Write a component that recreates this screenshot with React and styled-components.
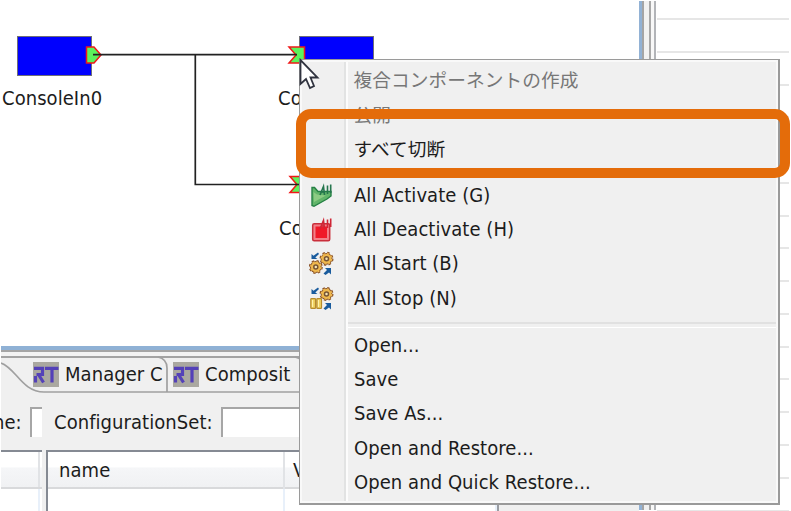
import React from "react";
import styled, { createGlobalStyle } from "styled-components";

const GlobalStyle = createGlobalStyle`
  * { box-sizing: border-box; }
  body { margin: 0; background: #fff; }
`;

const Window = styled.div`
  position: relative;
  width: 791px;
  height: 511px;
  padding: 1px 2px 1px 1px;
  overflow: hidden;
  display: grid;
  grid-template-columns: 638px 17px 1fr;
  background: #fff;
  color: #1c1c1c;
  font-family: "DejaVu Sans Condensed", "DejaVu Sans", "Noto Sans CJK JP", sans-serif;
  font-stretch: condensed;
  font-size: 20px;
  letter-spacing: 0.06px;
  white-space: nowrap;
`;

const Workbench = styled.div`
  display: grid;
  grid-template-rows: 345px 1fr;
  min-width: 0;
`;

const Canvas = styled.div`
  position: relative;
  overflow: hidden;
  background: #fff;
`;

const Wires = styled.svg`
  position: absolute;
  left: -1px;
  top: -1px;
`;

const NodeBox = styled.div`
  position: absolute;
  left: ${(p) => p.$x}px;
  top: 35px;
  width: 75px;
  height: 40px;
  border: 1px solid #6f6f78;
  background: #0000fe;
`;

const NodeLabel = styled.div`
  position: absolute;
  left: ${(p) => p.$x}px;
  top: ${(p) => p.$y}px;
  line-height: 24px;
`;

const VerticalSash = styled.div`
  display: grid;
  grid-template-columns: 3px 2px 5px 2px 3px 2px;
  height: 509px;
`;

const Strip = styled.div`
  background: ${(p) => p.$color};
`;

const PropertyTable = styled.div`
  margin-left: 1px;
  background: repeating-linear-gradient(
    to bottom,
    #fff 0 17px,
    #e6e6e6 17px 19px,
    #fff 19px 32.77px
  );
`;

const BottomView = styled.div`
  display: grid;
  grid-template-rows: 4px 2px 4px 2px 34px 58px 1fr;
  background: #f0f0f0;
  min-width: 0;
`;

const TabBar = styled.div`
  display: flex;
  position: relative;
  padding-left: 32px;
`;

const TabOutline = styled.svg`
  position: absolute;
  left: 0;
  top: -2px;
`;

const Tab = styled.div`
  position: relative;
  display: flex;
  align-items: center;
  width: ${(p) => p.$w}px;
  height: 32px;
  padding-top: 1px;
  gap: 6px;
  line-height: 22px;
`;

const TabTitle = styled.span`
  padding-bottom: 2px;
`;

const RtBadge = styled.div`
  display: flex;
  justify-content: center;
  width: 26px;
  height: 25px;
  background: #aaa8a0;
`;

const FormRow = styled.div`
  display: flex;
  align-items: flex-start;
  padding-top: 15px;
  line-height: 30px;
`;

const FieldLabel = styled.div`
  width: ${(p) => p.$w}px;
  margin-left: ${(p) => p.$ml || 0}px;
`;

const Field = styled.div`
  width: ${(p) => p.$w}px;
  height: 30px;
  border-top: 2px solid #a6a6a6;
  border-left: 2px solid #a6a6a6;
  background: #fff;
`;

const Tables = styled.div`
  display: grid;
  grid-template-columns: 41px 453px 1fr;
  column-gap: 4px;
`;

const Table = styled.div`
  border-top: 2px solid #858a93;
  border-left: ${(p) => (p.$framed ? "2px solid #858a93" : "0")};
  border-right: ${(p) => (p.$framed ? "2px solid #9a9da3" : "0")};
  background: #fff;
`;

const HeaderRow = styled.div`
  display: grid;
  grid-template-columns: ${(p) => p.$cols};
  height: 37px;
  border-bottom: 2px solid #d8d9db;
  background: linear-gradient(#fff 0 42%, #f5f6f8 46%, #f0f1f3 100%);
  line-height: 37px;
`;

const HeaderCell = styled.div`
  padding-left: ${(p) => p.$pad || 8}px;
  border-right: 2px solid #e1e3e6;
`;

const BodyRow = styled.div`
  display: grid;
  grid-template-columns: ${(p) => p.$cols};
  height: 22px;
`;

const BodyCell = styled.div`
  border-right: 2px solid #e8f0fa;
`;

const ContextMenu = styled.div`
  position: absolute;
  left: 299px;
  top: 59px;
  width: 481px;
  height: 446px;
  padding: 3px 2px;
  border: 2px solid #9a9a9a;
  border-top-width: 1px;
  border-left-width: 1px;
  box-shadow: inset 0 0 0 2px #f9f9f9;
  background: linear-gradient(to right, transparent 44px, #e2e3e3 44px 46px, #fcfcfc 46px 48px, transparent 48px),
    #f0f0f0;
`;

const MenuItem = styled.div`
  display: grid;
  grid-template-columns: ${(p) => (p.$jp ? 51.5 : 52)}px 1fr;
  height: 34.35px;
  align-items: center;
  color: ${(p) => (p.$disabled ? "#777" : "#1c1c1c")};
  font-size: ${(p) => (p.$jp ? 18.7 : 20)}px;
  line-height: 30px;
`;

const ItemText = styled.span`
  padding-top: ${(p) => (p.$jp ? 2 : 0)}px;
  padding-bottom: ${(p) => (p.$jp ? 0 : 2)}px;
`;

const IconSlot = styled.div`
  display: flex;
  width: 26px;
  height: 26px;
  margin-left: 7px;
`;

const MenuDivider = styled.div`
  height: 12.5px;
  padding-top: 6px;
  margin-left: 46px;

  &::before {
    content: "";
    display: block;
    height: 3px;
    border-top: 2px solid #e1e1e1;
    border-bottom: 1px solid #fff;
  }
`;

const Highlight = styled.div`
  position: absolute;
  left: 296px;
  top: 109px;
  width: 494px;
  height: 69px;
  border: 10px solid #e46c0a;
  border-radius: 15px;
`;

const Pointer = styled.svg`
  position: absolute;
  left: 298px;
  top: 58px;
`;

const AllMark = ({ color }) => (
  <path d="M11 12 L14.500 3.500 L15.500 12 M12 9 H15 M18.500 2.500 V11 M21.700 1.500 V10" fill="none" stroke={color} strokeWidth="1.600" />
);

const ActivateIcon = () => (
  <svg width="26" height="26" viewBox="0 0 26 26">
    <path d="M3 4.500 L5.500 4.500 L9 8.500 L22 8.500 V13 L18 16 L5 23.300 L3 22.500 Z" fill="#62b56a" stroke="#258044" strokeWidth="1.400" />
    <path d="M4.500 9 L8 11.500 L17 12.500 L5 19 Z" fill="#8ccb83" />
    <AllMark color="#26764e" />
  </svg>
);

const DeactivateIcon = () => (
  <svg width="26" height="26" viewBox="0 0 26 26">
    <rect x="3.700" y="6.700" width="17" height="17" rx="1.500" fill="#f28088" stroke="#c92f3b" strokeWidth="1.500" />
    <rect x="6.500" y="9.500" width="11.500" height="11.500" fill="#f01928" />
    <AllMark color="#cf2636" />
  </svg>
);

const Gear = ({ x, y }) => (
  <g transform={`translate(${x} ${y})`}>
    <circle r="5.900" fill="#8b5429" />
    <circle r="6" fill="none" stroke="#8b5429" strokeWidth="2" strokeDasharray="2.400 2.310" />
    <circle r="4.900" fill="#efb84d" />
    <circle r="5.200" fill="none" stroke="#f1bd58" strokeWidth="1.200" strokeDasharray="2 2.080" />
    <circle r="2" fill="#f6e5b5" stroke="#765334" strokeWidth="1.500" />
  </g>
);

const Arrows = () => (
  <g fill="#195b9d">
    <path d="M2.500 3 L4.500 4.800 L9 1.500 L10 3 L6.300 6.500 L8.500 8 H2.500 Z" />
    <path d="M22 17 V23.500 L20 21.500 L16.500 24 L14.500 22.500 L18 19 L16 17 Z" />
  </g>
);

const StartIcon = () => (
  <svg width="26" height="26" viewBox="0 0 26 26">
    <Arrows />
    <Gear x={17.5} y={7.8} />
    <Gear x={6.8} y={16} />
  </svg>
);

const StopIcon = () => (
  <svg width="26" height="26" viewBox="0 0 26 26">
    <Arrows />
    <Gear x={17.5} y={8} />
    <g fill="#f0d465" stroke="#b78b2c" strokeWidth="1.200">
      <rect x="1.800" y="12.600" width="4.700" height="9.800" rx=".7" />
      <rect x="7.800" y="12.600" width="4.700" height="9.800" rx=".7" />
    </g>
    <path d="M3.500 14 V21 M9.500 14 V21" stroke="#fff2ae" />
  </svg>
);

/* The RT toolchain mark: an open R joined to a T. */
const RtMark = () => (
  <svg width="26" height="25" viewBox="0 0 26 25">
    <g fill="none" stroke="#5441b8" strokeWidth="3.200">
      <path d="M1 6.300 H9.500 V12.500 H3.500 M5.500 12.500 L10.500 20.500 M2.500 14 V20.500" />
      <path d="M12 6.300 H25.500 M19 6.300 V20.500" />
    </g>
  </svg>
);

const primaryItems = [
  { label: "All Activate (G)", icon: <ActivateIcon /> },
  { label: "All Deactivate (H)", icon: <DeactivateIcon /> },
  { label: "All Start (B)", icon: <StartIcon /> },
  { label: "All Stop (N)", icon: <StopIcon /> },
];

const fileItems = ["Open...", "Save", "Save As...", "Open and Restore...", "Open and Quick Restore..."];

const Item = ({ label, icon, jp, disabled }) => (
  <MenuItem $jp={jp} $disabled={disabled}>
    <IconSlot>{icon}</IconSlot>
    <ItemText $jp={jp}>{label}</ItemText>
  </MenuItem>
);

export default function App() {
  return (
    <>
      <GlobalStyle />
      <Window>
        <Workbench>
          <Canvas>
            <NodeBox $x={16} />
            <NodeBox $x={298} />
            <Wires width="330" height="250">
              <path d="M86.500 47 H94 L101 55 L94 63 H86.500 Z" fill="#5cf35c" stroke="#f01818" strokeWidth="1.500" />
              <path d="M289 47 H304.500 V63 H289 L296 55 Z" fill="#5cf35c" stroke="#f01818" strokeWidth="1.500" />
              <path d="M290 176.500 H305 V192.500 H290 L297 184.500 Z" fill="#5cf35c" stroke="#f01818" strokeWidth="1.500" />
              <path d="M93 54.700 H297 M195.300 54.700 V184.500 H300" fill="none" stroke="#222" strokeWidth="1.700" />
            </Wires>
            <NodeLabel $x={1} $y={85}>ConsoleIn0</NodeLabel>
            <NodeLabel $x={277} $y={85}>Co</NodeLabel>
            <NodeLabel $x={278} $y={215}>Co</NodeLabel>
          </Canvas>
          <BottomView>
            <Strip $color="#8fb1d5" />
            <Strip $color="#a5a5a5" />
            <Strip $color="#f3f3f3" />
            <Strip $color="#a3a3a3" />
            <TabBar>
              <TabOutline width="500" height="38">
                <path d="M0 7 C15 12 21 36 43 36 H500" fill="none" stroke="#a0a0a0" strokeWidth="1.700" />
                <path d="M157 1 Q166 3 166 12 V36 M294 1 Q303 3 303 12 V36" fill="none" stroke="#a0a0a0" strokeWidth="1.700" />
              </TabOutline>
              <Tab $w={140}>
                <RtBadge><RtMark /></RtBadge>
                <TabTitle>Manager C</TabTitle>
              </Tab>
              <Tab $w={140}>
                <RtBadge><RtMark /></RtBadge>
                <TabTitle>Composit</TabTitle>
              </Tab>
            </TabBar>
            <FormRow>
              <FieldLabel $w={37} $ml={-8}>ne:</FieldLabel>
              <Field $w={12} />
              <FieldLabel $w={167} $ml={12}>ConfigurationSet:</FieldLabel>
              <Field $w={278} />
            </FormRow>
            <Tables>
              <Table>
                <HeaderRow $cols="39px 1fr"><HeaderCell /></HeaderRow>
                <BodyRow $cols="39px 1fr"><BodyCell /></BodyRow>
              </Table>
              <Table $framed>
                <HeaderRow $cols="237px 1fr">
                  <HeaderCell $pad={11}>name</HeaderCell>
                  <HeaderCell $pad={8}>V</HeaderCell>
                </HeaderRow>
                <BodyRow $cols="237px 1fr"><BodyCell /><BodyCell /></BodyRow>
              </Table>
            </Tables>
          </BottomView>
        </Workbench>
        <VerticalSash>
          <Strip $color="#92b2d5" />
          <Strip $color="#a5a5a5" />
          <Strip $color="#f2f2f2" />
          <Strip $color="#a8a8a8" />
          <Strip $color="#f8f8f8" />
          <Strip $color="#b2b4b8" />
        </VerticalSash>
        <PropertyTable />

        <ContextMenu>
          <Item jp disabled label="複合コンポーネントの作成" />
          <Item jp disabled label="公開" />
          <Item jp label="すべて切断" />
          <MenuDivider />
          {primaryItems.map((item) => (
            <Item key={item.label} {...item} />
          ))}
          <MenuDivider />
          {fileItems.map((label) => (
            <Item key={label} label={label} />
          ))}
        </ContextMenu>
        <Highlight />
        <Pointer width="24" height="34">
          <path d="M2.500 2 V26 L8 21 L12 30 L16 28 L12.500 19.500 H19.500 Z" fill="#fff" stroke="#30333f" strokeWidth="1.800" />
        </Pointer>
      </Window>
    </>
  );
}
